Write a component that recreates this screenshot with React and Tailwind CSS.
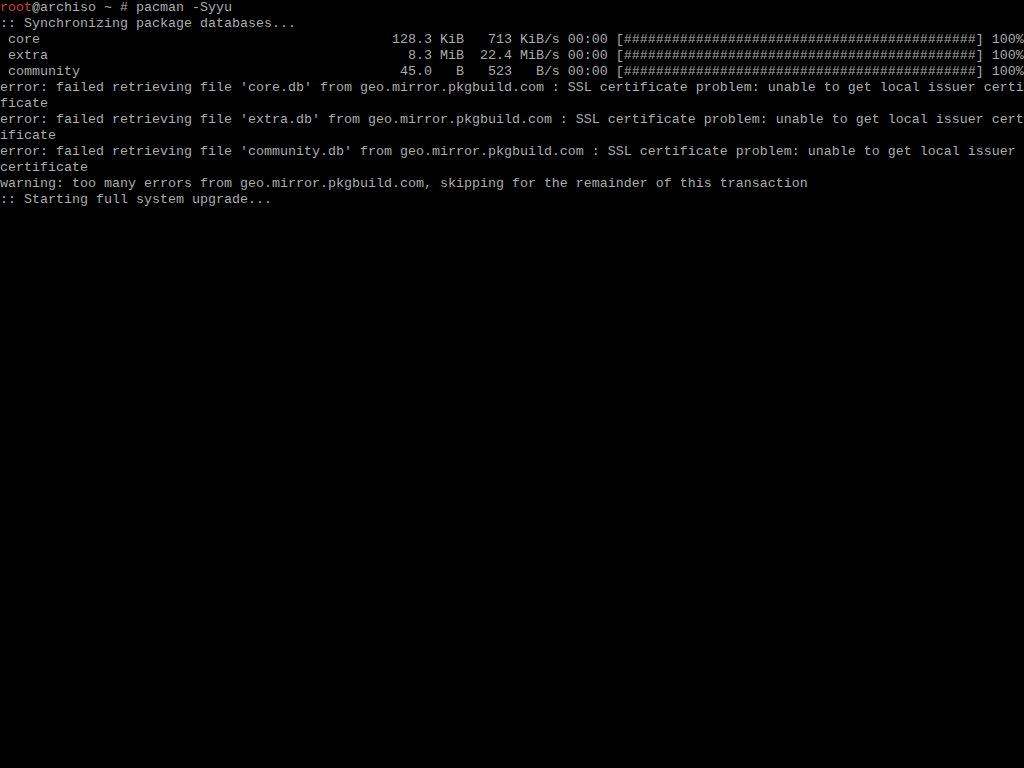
const hashes = "#".repeat(44);

const lines = [
  null,
  ":: Synchronizing package databases...",
  " core                                            128.3 KiB   713 KiB/s 00:00 [" + hashes + "] 100%",
  " extra                                             8.3 MiB  22.4 MiB/s 00:00 [" + hashes + "] 100%",
  " community                                        45.0   B   523   B/s 00:00 [" + hashes + "] 100%",
  "error: failed retrieving file 'core.db' from geo.mirror.pkgbuild.com : SSL certificate problem: unable to get local issuer certi",
  "ficate",
  "error: failed retrieving file 'extra.db' from geo.mirror.pkgbuild.com : SSL certificate problem: unable to get local issuer cert",
  "ificate",
  "error: failed retrieving file 'community.db' from geo.mirror.pkgbuild.com : SSL certificate problem: unable to get local issuer ",
  "certificate",
  "warning: too many errors from geo.mirror.pkgbuild.com, skipping for the remainder of this transaction",
  ":: Starting full system upgrade...",
];

function App() {
  return (
    <div className="w-[1024px] h-[768px] bg-black overflow-hidden text-[#ababab] font-['Liberation_Mono',monospace] text-[13.333px] leading-[16px]">
      {lines.map((line, i) =>
        line === null ? (
          <div key={i} className="h-4 whitespace-pre">
            <span className="text-[#d03c3c]">root</span>@archiso ~ # pacman -Syyu
          </div>
        ) : (
          <div key={i} className="h-4 whitespace-pre">
            {line}
          </div>
        )
      )}
    </div>
  );
}

export default App;
